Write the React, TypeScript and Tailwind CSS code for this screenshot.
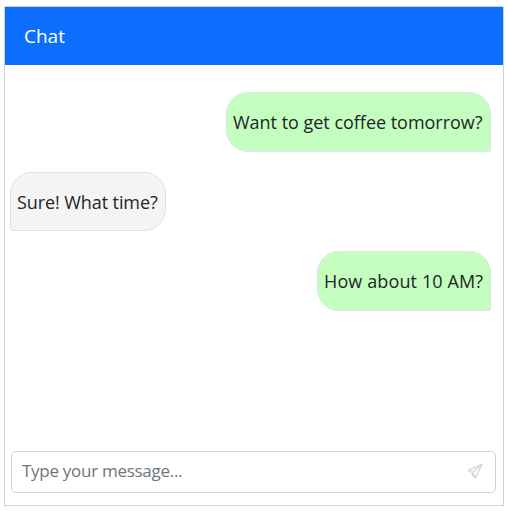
type Message = { text: string; box: string; row: string };

const messages: Message[] = [
  { text: "Want to get coffee tomorrow?", box: "w-[265px] h-[60px] rounded-br-[3px] bg-[#c5ffc0] tracking-[-0.02px]", row: "justify-end pr-3" },
  { text: "Sure! What time?", box: "w-[156px] h-[59px] rounded-bl-[3px] bg-[#f4f4f4] pt-px tracking-[-0.09px]", row: "justify-start pl-[5px]" },
  { text: "How about 10 AM?", box: "w-[174px] h-[60px] rounded-br-[3px] bg-[#c5ffc0] tracking-[0.12px]", row: "justify-end pr-3" },
];

function SendIcon() {
  return (
    <svg width="16" height="16" viewBox="0 0 16 16" fill="none" stroke="#d3d7dc" strokeWidth="1.4" strokeLinejoin="round" strokeLinecap="round">
      <path d="M15 1.2 L1.2 7.4 L5.4 9.4 L8.6 14.8 Z" />
      <path d="M15 1.2 L5.4 9.4 L5.6 12.6 L8.6 14.8" />
    </svg>
  );
}

export default function App() {
  return (
    <div className="h-[511px] w-[507px] bg-white pt-[6px] pl-1 font-['Open_Sans','Noto_Sans',sans-serif] text-[18px] text-[#212529]">
      <div className="flex h-[500px] w-[500px] flex-col border border-[#ced4da] bg-white">
        <header className="flex h-[58px] shrink-0 items-center bg-[#0d6efd] pl-[19px] text-[19px] text-white">
          Chat
        </header>
        <main className="flex flex-1 flex-col gap-5 pt-[27px]">
          {messages.map((m) => (
            <div key={m.text} className={`flex ${m.row}`}>
              <div className={`flex items-center rounded-[22px] border border-[#dee2e6] pl-[6px] whitespace-nowrap ${m.box}`}>
                {m.text}
              </div>
            </div>
          ))}
        </main>
        <footer className="px-1.5 pb-3">
          <div className="flex h-[42px] w-[485px] items-center justify-between rounded-[5px] border border-[#ced4da] pr-3 pb-0.5 pl-2.5 text-[17px] tracking-[-0.28px] text-[#6c757d]">
            <span>Type your message...</span>
            <SendIcon />
          </div>
        </footer>
      </div>
    </div>
  );
}
